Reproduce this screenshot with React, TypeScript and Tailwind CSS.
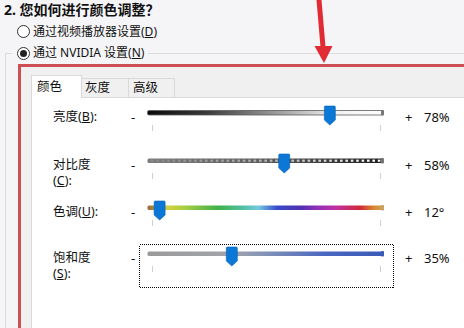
import React from 'react';

type Kind = 'brightness' | 'contrast' | 'hue' | 'saturation';

const stops: Record<Kind, [number, string][]> = {
  brightness: [
    [0, '#0a0a0a'],
    [0.25, '#3a3a3a'],
    [0.55, '#9c9c9c'],
    [0.8, '#f2f2f2'],
    [1, '#ffffff'],
  ],
  contrast: [
    [0, '#7c7c7c'],
    [0.5, '#5c5c5c'],
    [1, '#1e1e1e'],
  ],
  hue: [
    [0, '#9a6a3a'],
    [0.08, '#d8cf40'],
    [0.15, '#acd040'],
    [0.3, '#40b048'],
    [0.4, '#50c0a0'],
    [0.47, '#72c8e0'],
    [0.55, '#3848c8'],
    [0.65, '#5030b0'],
    [0.72, '#9030b8'],
    [0.8, '#c030a0'],
    [0.9, '#d02838'],
    [0.96, '#d88a30'],
    [1, '#c8a058'],
  ],
  saturation: [
    [0, '#9a9a9a'],
    [0.35, '#a2a4aa'],
    [0.5, '#8292b8'],
    [0.75, '#4a66c0'],
    [1, '#3a5ab8'],
  ],
};

const Slider = ({ kind, pct, focused }: { kind: Kind; pct: number; focused?: boolean }) => {
  const cx = 13 + pct * 228;
  const id = `track-${kind}`;
  return (
    <svg width="255" height="44" className="block shrink-0">
      <defs>
        <linearGradient id={id} x1="0" x2="1" y1="0" y2="0">
          {stops[kind].map(([o, c]) => (
            <stop key={o} offset={o} stopColor={c} />
          ))}
        </linearGradient>
      </defs>
      {focused && (
        <rect
          x="0.5"
          y="0.5"
          width="254"
          height="43"
          fill="none"
          stroke="#000"
          strokeDasharray="1 1"
          shapeRendering="crispEdges"
        />
      )}
      <rect
        x="8.5"
        y="7.5"
        width="236"
        height="4.5"
        rx="1.5"
        fill={`url(#${id})`}
        stroke={kind === 'brightness' ? '#5a5a5a' : 'none'}
        strokeWidth="0.8"
      />
      {kind === 'contrast' &&
        Array.from({ length: 43 }).map((_, i) => (
          <rect
            key={i}
            x={12 + i * 5.4}
            y="8.6"
            width="2.6"
            height="2.2"
            fill="#fff"
            fillOpacity={0.12 + (0.88 * i) / 42}
          />
        ))}
      <rect
        x="242"
        y="7"
        width="3"
        height="5.5"
        rx="1"
        fill={kind === 'hue' ? '#c8a060' : kind === 'saturation' ? '#3a5ab8' : '#777'}
      />
      <line x1="13.5" y1="22" x2="13.5" y2="28" stroke="#cfcfcf" />
      <line x1="241.5" y1="22" x2="241.5" y2="28" stroke="#cfcfcf" />
      <path
        d={`M${cx - 5.5} 4 Q${cx - 5.5} 3 ${cx - 4.5} 3 H${cx + 4.5} Q${cx + 5.5} 3 ${cx + 5.5} 4 V17 L${cx} 22 L${cx - 5.5} 17 Z`}
        fill="#0b77d6"
        stroke="#0a63b4"
        strokeWidth="0.6"
      />
    </svg>
  );
};

const Radio = ({ checked }: { checked?: boolean }) => (
  <span className="flex items-center justify-center w-[13px] h-[13px] rounded-full border border-[#333] bg-white shrink-0">
    {checked && <span className="w-[7px] h-[7px] rounded-full bg-[#222]" />}
  </span>
);

const rows: { kind: Kind; label: React.ReactNode; value: string; pct: number; h: string; focused?: boolean }[] = [
  {
    kind: 'brightness',
    label: (
      <>
        亮度(<u>B</u>):
      </>
    ),
    value: '78%',
    pct: 0.78,
    h: 'h-[48px]',
  },
  {
    kind: 'contrast',
    label: (
      <>
        对比度
        <br />(<u>C</u>):
      </>
    ),
    value: '58%',
    pct: 0.58,
    h: 'h-[47px]',
  },
  {
    kind: 'hue',
    label: (
      <>
        色调(<u>U</u>):
      </>
    ),
    value: '12°',
    pct: 12 / 359,
    h: 'h-[46px]',
  },
  {
    kind: 'saturation',
    label: (
      <>
        饱和度
        <br />(<u>S</u>):
      </>
    ),
    value: '35%',
    pct: 0.35,
    h: 'h-[46px]',
    focused: true,
  },
];

export default function App() {
  return (
    <div className="relative w-[464px] h-[328px] overflow-hidden bg-[#f5f5f7] text-[#111] font-['Noto_Sans','Noto_Sans_CJK_SC',sans-serif]">
      <div className="h-[21px] pl-[4px] pt-px text-[14px] font-bold leading-[17px]">2. 您如何进行颜色调整？</div>
      <div className="flex items-center h-[21px] pl-[17px] gap-[3px] text-[12px]">
        <Radio />
        <span>
          通过视频播放器设置(<u>D</u>)
        </span>
      </div>
      <div className="relative z-10 flex items-center w-fit h-[22px] -mb-[11px] ml-[12px] pl-[5px] pr-[4px] gap-[3px] bg-[#f5f5f7] text-[12px]">
        <Radio checked />
        <span>
          通过 NVIDIA 设置(<u>N</u>)
        </span>
      </div>
      <div className="ml-[5px] border-l border-t border-[#dcdcdc] pt-[10px] pl-[12px]">
        <div className="w-[470px] h-[280px] border-[3px] border-[#cf4f56] bg-[#f0f0f0] pl-[10px] pt-[8px]">
          <div className="flex items-end h-[22px] text-[12.5px]">
            <div className="relative z-10 flex items-center w-[51px] h-[23px] -mb-px pl-[5px] bg-white border border-b-0 border-[#d9d9d9]">
              颜色
            </div>
            <div className="flex items-center w-[47px] h-[19px] pl-[3px] bg-[#f0f0f0] border-t border-r border-[#d9d9d9]">
              灰度
            </div>
            <div className="flex items-center w-[46px] h-[19px] pl-[4px] bg-[#f0f0f0] border-t border-r border-[#d9d9d9]">
              高级
            </div>
          </div>
          <div className="h-[260px] bg-white border-t border-l border-[#d9d9d9] pt-[5px] pl-[21px]">
            {rows.map((r) => (
              <div key={r.kind} className={`flex items-start ${r.h}`}>
                <div className="w-[78px] mt-[6px] text-[12.5px] leading-[16px]">{r.label}</div>
                <div className="w-[8px] mt-[6px] text-[13px] leading-[17px]">-</div>
                <Slider kind={r.kind} pct={r.pct} focused={r.focused} />
                <div className="w-[19px] ml-[11px] mt-[6px] text-[13px] leading-[17px]">+</div>
                <div className="mt-[6px] text-[13px] leading-[17px]">{r.value}</div>
              </div>
            ))}
          </div>
        </div>
      </div>
      <svg className="absolute left-0 top-0 pointer-events-none" width="464" height="70">
        <polygon points="316.5,0 321.5,0 325.6,48 320.6,48" fill="#e02a34" />
        <polygon points="314.5,46 332.5,46 324,63" fill="#e02a34" />
      </svg>
    </div>
  );
}
